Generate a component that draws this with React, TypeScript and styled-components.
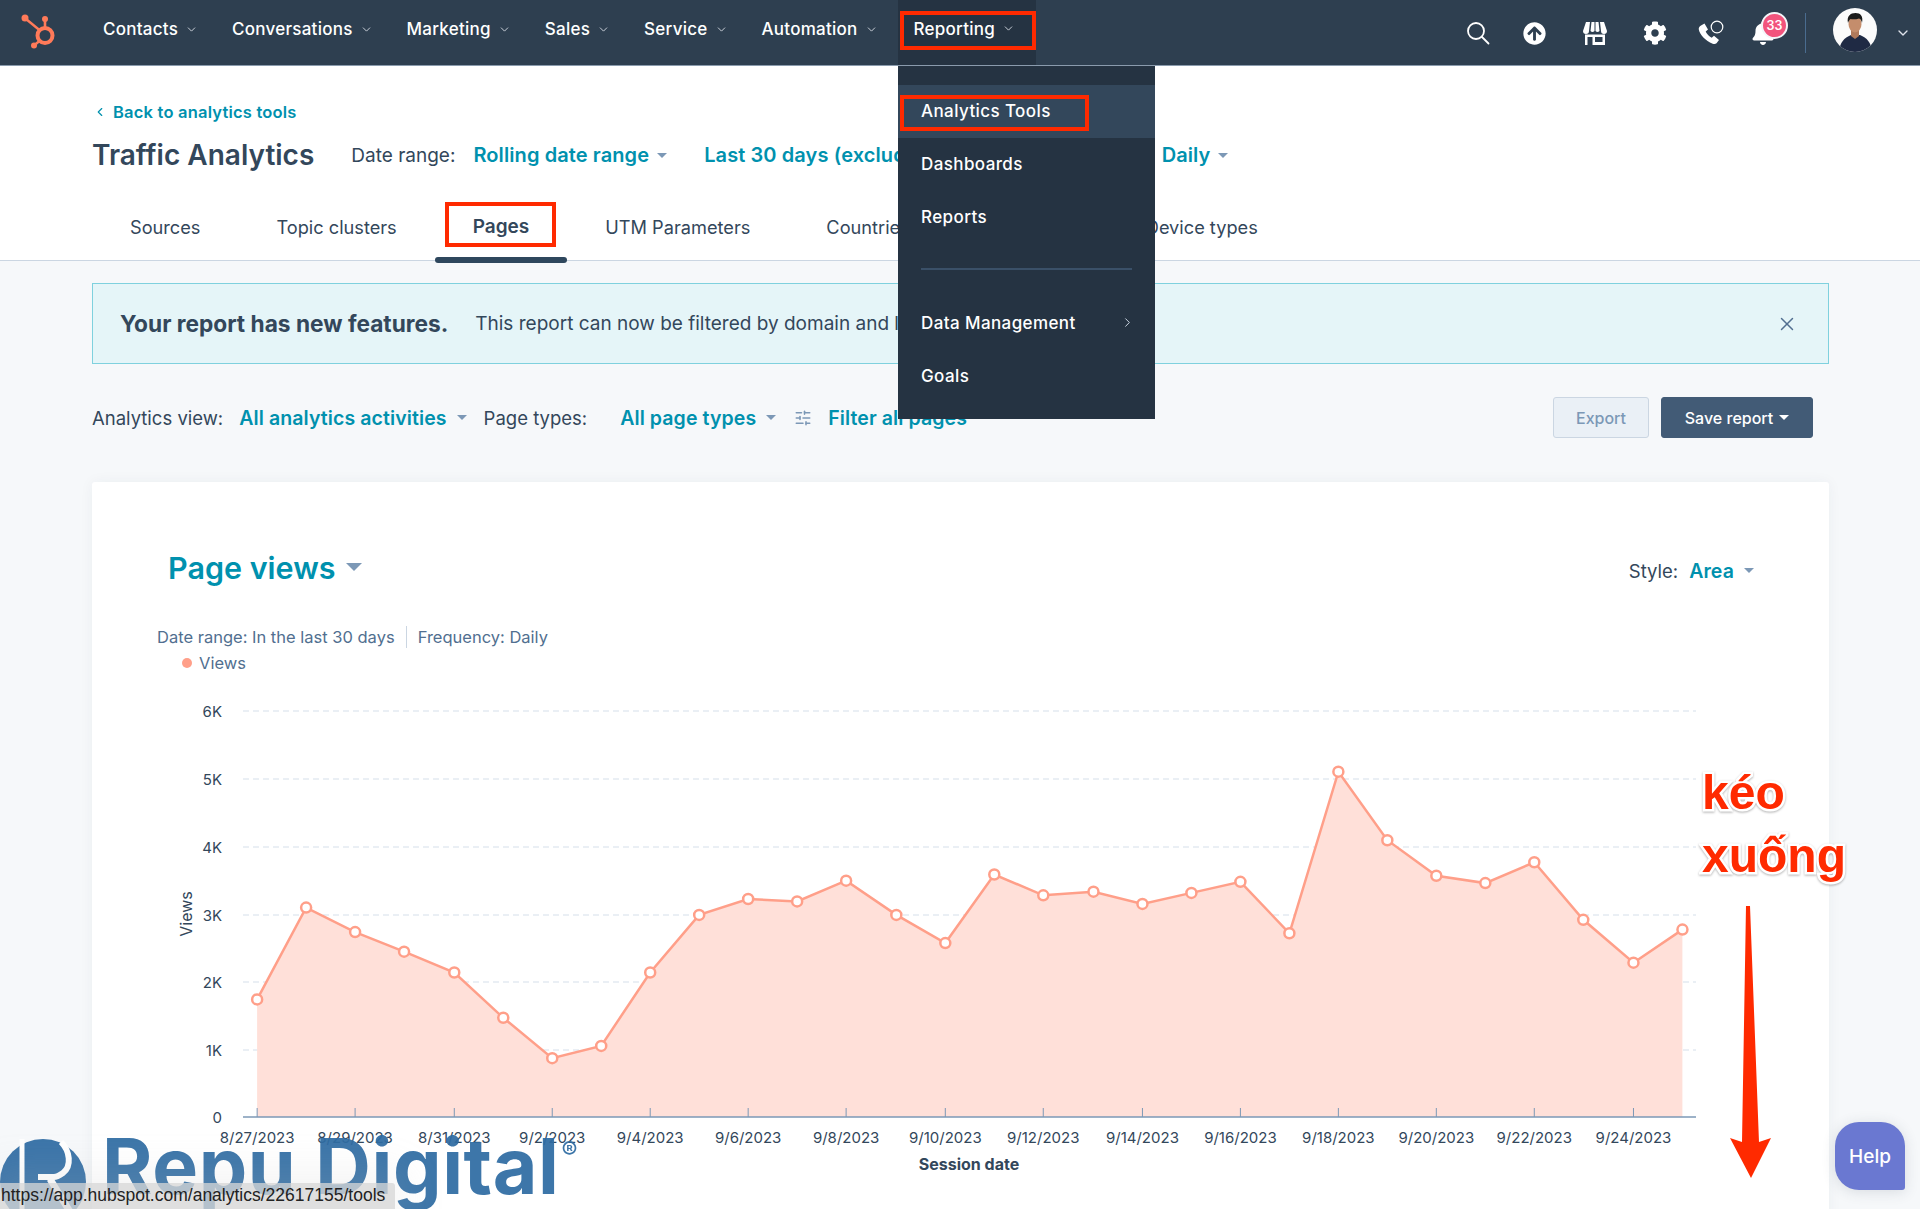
import React from 'react'
import styled, { createGlobalStyle } from 'styled-components'
import { ChevronDown, ChevronLeft, ChevronRight, SlidersHorizontal, X } from 'lucide-react'
import { FaArrowCircleUp, FaBell, FaCog } from 'react-icons/fa'

const GlobalStyle = createGlobalStyle`
    html, body {
        margin: 0;
        padding: 0;
        background: #f6f8fa;
    }
    * {
        box-sizing: border-box;
    }
`

const PageStyled = styled.div`
    position: relative;
    width: 1920px;
    height: 1209px;
    overflow: hidden;
    background: #f6f8fa;
    color: #33475b;
    font-family: 'Inter', 'Liberation Sans', sans-serif;
`

/* top nav */
const HeaderStyled = styled.header`
    display: flex;
    align-items: stretch;
    height: 66px;
    background: #2e3f50;
    border-bottom: 1px solid #8a9bad;
    color: #fff;
`
const LogoWrapperStyled = styled.div`
    display: flex;
    align-items: center;
    width: 86px;
    padding: 0 0 4px 18px;
`
const NavListStyled = styled.nav`
    display: flex;
    align-items: stretch;
`
const NavItemStyled = styled.div<{ $active?: boolean }>`
    position: relative;
    display: flex;
    align-items: center;
    padding: ${(p) => (p.$active ? '0 0 0 2px' : '0 17px')};
    margin-left: ${(p) => (p.$active ? '3px' : '0')};
    background: ${(p) => (p.$active ? '#253342' : 'transparent')};
    font-size: 17px;
    letter-spacing: 0.25px;
    font-weight: 500;
`
const NavLabelStyled = styled.div<{ $marked?: boolean }>`
    display: flex;
    align-items: center;
    gap: 7px;
    width: ${(p) => (p.$marked ? '136px' : 'auto')};
    height: ${(p) => (p.$marked ? '39px' : 'auto')};
    margin-bottom: ${(p) => (p.$marked ? '5px' : '7px')};
    padding: ${(p) => (p.$marked ? '0 0 3px 10px' : '0')};
    border: ${(p) => (p.$marked ? '4px solid #ff2a00' : 'none')};
`
const NavRightStyled = styled.div`
    display: flex;
    align-items: center;
    margin-left: auto;
    padding-right: 9px;
`
const NavIconStyled = styled.div<{ $width: number }>`
    position: relative;
    display: flex;
    align-items: center;
    justify-content: center;
    width: ${(p) => p.$width}px;
    height: 100%;
    padding-top: 1px;
`
const BadgeStyled = styled.span`
    position: absolute;
    top: 12px;
    left: 26px;
    width: 27px;
    height: 27px;
    border-radius: 50%;
    border: 2px solid #f4f6f9;
    background: #f2547d;
    color: #fff;
    font-size: 12.5px;
    font-weight: 600;
    line-height: 23px;
    text-align: center;
`
const NavDividerStyled = styled.div`
    width: 1px;
    height: 40px;
    margin: 0 27px 0 14px;
    background: #4a6c8f;
`
const AvatarStyled = styled.svg`
    margin-bottom: 5px;
`

/* reporting menu */
const MenuStyled = styled.div`
    position: absolute;
    top: 66px;
    left: 898px;
    z-index: 5;
    width: 257px;
    height: 353px;
    padding-top: 19px;
    background: #253342;
    font-size: 17px;
    letter-spacing: 0.4px;
    font-weight: 500;
    color: #fff;
`
const MenuItemStyled = styled.div<{ $active?: boolean }>`
    position: relative;
    display: flex;
    align-items: center;
    justify-content: space-between;
    height: 52.8px;
    padding: 0 20px 0 23px;
    background: ${(p) => (p.$active ? '#33475b' : 'transparent')};
`
const MenuMarkStyled = styled.div`
    position: absolute;
    top: 10px;
    left: 2px;
    width: 189px;
    height: 36px;
    border: 4px solid #ff2a00;
`
const MenuDividerStyled = styled.div`
    height: 2px;
    margin: 25px 23px 26px 23px;
    background: #3a5068;
`

/* page header */
const SubHeaderStyled = styled.section`
    height: 195px;
    background: #fff;
    border-bottom: 1px solid #cbd6e2;
    padding-top: 35px;
`
const BackLinkStyled = styled.a`
    display: flex;
    align-items: center;
    gap: 6px;
    margin-left: 93px;
    height: 22px;
    font-size: 16.5px;
    letter-spacing: 0.2px;
    font-weight: 600;
    color: #0091ae;
`
const TitleStyled = styled.h1`
    margin: 0 37px 0 0;
    font-size: 28px;
    font-weight: 600;
    color: #33475b;
    white-space: nowrap;
`
const LabelStyled = styled.span<{ $space?: number }>`
    font-size: 18.5px;
    font-weight: 400;
    color: #33475b;
    white-space: nowrap;
    margin-right: ${(p) => p.$space ?? 18}px;
`
const DropLinkStyled = styled.span<{ $space?: number }>`
    display: inline-flex;
    align-items: center;
    gap: 10px;
    font-size: 19.5px;
    letter-spacing: 0.1px;
    font-weight: 600;
    color: #0091ae;
    white-space: nowrap;
    margin-right: ${(p) => p.$space ?? 0}px;
`
const TitleRowStyled = styled.div`
    display: flex;
    align-items: center;
    height: 40px;
    margin-top: 12px;
    padding-left: 92px;

    & ${LabelStyled} {
        font-size: 19px;
    }
    & ${DropLinkStyled} {
        font-size: 20px;
        gap: 8px;
    }
`
const CaretStyled = styled.i<{ $size?: number; $light?: boolean }>`
    display: inline-block;
    width: 0;
    height: 0;
    border-left: ${(p) => p.$size ?? 5}px solid transparent;
    border-right: ${(p) => p.$size ?? 5}px solid transparent;
    border-top: ${(p) => p.$size ?? 5}px solid ${(p) => (p.$light ? '#fff' : '#7c98b6')};
`
const TabsStyled = styled.div`
    display: flex;
    height: 63px;
    margin-top: 25px;
    padding-left: 92px;
`
const TabStyled = styled.div<{ $active?: boolean; $skip?: number }>`
    position: relative;
    display: flex;
    align-items: center;
    height: 100%;
    padding: 0 38px 10px;
    margin-left: ${(p) => p.$skip ?? 0}px;
    font-size: ${(p) => (p.$active ? '19px' : '18.2px')};
    font-weight: ${(p) => (p.$active ? 600 : 400)};
    white-space: nowrap;
    &::after {
        content: '';
        display: ${(p) => (p.$active ? 'block' : 'none')};
        position: absolute;
        left: 0;
        right: 0;
        bottom: 0;
        height: 6px;
        border-radius: 3px;
        background: #2e475d;
    }
`
const TabMarkStyled = styled.div`
    position: absolute;
    top: 2px;
    left: 10px;
    right: 11px;
    height: 45px;
    border: 4px solid #ff2a00;
`

/* alert */
const AlertStyled = styled.div`
    display: flex;
    align-items: center;
    height: 81px;
    margin: 22px 91px 0 92px;
    padding: 0 30px 0 27px;
    background: #e5f5f8;
    border: 1px solid #7fd1de;
`
const AlertTitleStyled = styled.strong`
    margin-right: 27px;
    font-size: 22.7px;
    font-weight: 700;
    color: #33475b;
`
const AlertTextStyled = styled.span`
    font-size: 19px;
    flex: 1;
`

/* filters */
const FilterRowStyled = styled.div`
    display: flex;
    align-items: center;
    height: 41px;
    margin-top: 33px;
    padding: 0 107px 0 92px;
`
const FilterIconStyled = styled.span`
    display: inline-flex;
    margin: 0 16px 0 18px;
    color: #7c98b6;
`
const ExportButtonStyled = styled.button`
    width: 96px;
    height: 41px;
    margin-left: auto;
    background: #eaf0f6;
    border: 1px solid #cbd6e2;
    border-radius: 3px;
    color: #7c98b6;
    font: 500 16px 'Inter', sans-serif;
`
const SaveButtonStyled = styled.button`
    display: inline-flex;
    align-items: center;
    justify-content: center;
    gap: 6px;
    width: 152px;
    height: 41px;
    margin-left: 12px;
    background: #425b76;
    border: 1px solid #425b76;
    border-radius: 3px;
    color: #fff;
    font: 500 16px 'Inter', sans-serif;
`

/* chart card */
const CardStyled = styled.section`
    height: 760px;
    margin: 44px 91px 0 92px;
    padding-top: 64px;
    background: #fff;
    border-radius: 3px;
    box-shadow: 0 0 14px rgba(45, 62, 80, 0.05);
`
const CardHeadStyled = styled.div`
    display: flex;
    align-items: center;
    justify-content: space-between;
    height: 42px;
    padding: 0 75px 0 76px;
`
const CardTitleStyled = styled.h2`
    display: flex;
    align-items: center;
    gap: 10px;
    margin: 0;
    font-size: 30.5px;
    font-weight: 600;
    color: #0091ae;
`
const StyleLabelStyled = styled.div`
    display: flex;
    align-items: center;
    gap: 11px;
    margin-top: 7px;
    font-size: 18.5px;
`
const MetaRowStyled = styled.div`
    display: flex;
    align-items: center;
    margin-top: 38px;
    padding-left: 65px;
    font-size: 16.5px;
    color: #516f90;
`
const MetaDividerStyled = styled.span`
    width: 1px;
    height: 22px;
    margin: 0 11px;
    background: #cbd6e2;
`
const LegendStyled = styled.div`
    display: flex;
    align-items: center;
    gap: 7px;
    margin-top: 5px;
    padding-left: 90px;
    font-size: 16.5px;
    color: #516f90;
`
const LegendDotStyled = styled.span`
    width: 10px;
    height: 10px;
    border-radius: 50%;
    background: #ff9f89;
`
const ChartStyled = styled.svg`
    display: block;
    margin-top: 6px;
`

/* overlays */
const WatermarkStyled = styled.div`
    position: absolute;
    left: 0;
    top: 1120px;
    z-index: 6;
    display: flex;
    align-items: flex-start;
    color: #2f6ca3;
    opacity: 0.93;
`
const WatermarkLogoStyled = styled.svg`
    margin-top: 19px;
`
const WatermarkNameStyled = styled.span`
    margin-left: 16px;
    font-size: 77px;
    font-weight: 700;
    line-height: 92px;
    letter-spacing: 0.6px;
`
const WatermarkMarkStyled = styled.span`
    margin: 16px 0 0 2px;
    font-size: 24px;
    font-weight: 500;
`
const StatusBarStyled = styled.div`
    position: absolute;
    left: 0;
    bottom: 0;
    z-index: 7;
    width: 395px;
    height: 26px;
    padding-left: 1px;
    background: rgba(214, 214, 214, 0.78);
    border-top-right-radius: 3px;
    box-shadow: 0 0 40px 10px rgba(190, 190, 190, 0.18);
    color: #222;
    font-family: 'Liberation Sans', Arial, sans-serif;
    font-size: 17.5px;
    line-height: 25px;
    white-space: nowrap;
`
const HelpStyled = styled.div`
    position: absolute;
    left: 1835px;
    top: 1122px;
    z-index: 6;
    display: flex;
    align-items: center;
    justify-content: center;
    width: 70px;
    height: 68px;
    border-radius: 24px 24px 3px 24px;
    background: #6a78d1;
    box-shadow: 0 2px 14px rgba(45, 62, 80, 0.15);
    color: #fff;
    font-size: 19px;
    font-weight: 500;
`
const ScrollNoteStyled = styled.div`
    position: absolute;
    left: 1702px;
    top: 761px;
    z-index: 6;
    color: #ff2a00;
    font-family: 'Liberation Sans', Arial, sans-serif;
    font-size: 48px;
    font-weight: 700;
    line-height: 63px;
    -webkit-text-stroke: 5px #fff;
    paint-order: stroke fill;
    filter: drop-shadow(0 1px 1px rgba(0, 0, 0, 0.3));
`
const ScrollArrowStyled = styled.svg`
    position: absolute;
    left: 1725px;
    top: 900px;
    z-index: 6;
`
const AccountCaretStyled = styled.span`
    display: inline-flex;
    margin-left: 18px;
    color: #dfe3eb;
`

const navItems = ['Contacts', 'Conversations', 'Marketing', 'Sales', 'Service', 'Automation']

// points read off the chart, in page pixels
const SCALE = 1920 / 1568
const rawPoints: [number, number][] = [
    [210, 817], [250, 742], [290, 762], [330, 778], [371, 795], [411, 832], [451, 865], [491, 855],
    [531, 795], [571, 748], [611, 735], [651, 737], [691, 720], [732, 748], [772, 771], [812, 715],
    [852, 732], [893, 729], [933, 739], [973, 730], [1013, 721], [1053, 763], [1093, 631], [1133, 687],
    [1173, 716], [1213, 722], [1253, 705], [1293, 752], [1334, 787], [1374, 760],
]
const points = rawPoints.map(([x, y]) => [x * SCALE, y * SCALE])
const linePath = points.map(([x, y]) => `${x.toFixed(1)},${y.toFixed(1)}`).join(' ')
const areaPath = `${points[0][0].toFixed(1)},1118 ${linePath} ${points[points.length - 1][0].toFixed(1)},1118`

const gridLines = [
    { label: '6K', y: 712 },
    { label: '5K', y: 780 },
    { label: '4K', y: 848 },
    { label: '3K', y: 916 },
    { label: '2K', y: 983 },
    { label: '1K', y: 1051 },
]
const dateLabels = [
    '8/27/2023', '8/29/2023', '8/31/2023', '9/2/2023', '9/4/2023', '9/6/2023', '9/8/2023', '9/10/2023',
    '9/12/2023', '9/14/2023', '9/16/2023', '9/18/2023', '9/20/2023', '9/22/2023', '9/24/2023',
]

const HubspotLogo = () => (
    <svg width="42" height="40" viewBox="0 0 42 40">
        <g fill="none" stroke="#ff7a59" strokeLinecap="round">
            <circle cx="27" cy="24.500" r="7.500" strokeWidth="4" />
            <path d="M27 16V9" strokeWidth="2.600" />
            <path d="M22 19.500L8 8" strokeWidth="2.400" />
            <path d="M21.500 30L16.500 34" strokeWidth="2.400" />
        </g>
        <circle cx="7" cy="7" r="3.500" fill="#ff7a59" />
        <circle cx="27" cy="8" r="3" fill="#ff7a59" />
        <circle cx="16" cy="34.500" r="3" fill="#ff7a59" />
    </svg>
)

const SearchIcon = () => (
    <svg width="24" height="24" viewBox="0 0 24 24" fill="none" stroke="#fff" strokeWidth="1.800" strokeLinecap="round">
        <circle cx="10" cy="10" r="8" />
        <path d="M16 16l6.500 6.500" />
    </svg>
)

const StoreIcon = () => (
    <svg width="26" height="24" viewBox="0 0 26 24" fill="#fff">
        <path d="M4 1h4l-1 9a3 3 0 0 1-6 0zM9.500 1h3v9a3 3 0 0 1-4 0zM13.500 1h3l1 9a3 3 0 0 1-4 0zM18 1h4l3 9a3 3 0 0 1-6 0z" />
        <path fillRule="evenodd" d="M3 13.500h20V24H3zM5.500 16v8h5v-8zM13 16v5h7.500v-5z" />
    </svg>
)

const PhoneIcon = () => (
    <svg width="28" height="26" viewBox="0 0 28 26">
        <path
            d="M5 5.500l3.500-2 3.500 6-2.300 2c1 2.500 3.300 5 6 6.300l2.300-2 5 4.300-2.500 3.200c-1 .9-2.300 1-3.800.4C9.500 21 3.800 14.500 2.800 9.500c-.3-1.700.6-3 2.200-4z"
            fill="#fff"
        />
        <circle cx="21" cy="7" r="5.800" fill="none" stroke="#fff" strokeWidth="1.200" />
    </svg>
)

const Avatar = () => (
    <AvatarStyled width="44" height="44" viewBox="0 0 44 44">
        <defs>
            <clipPath id="avatar-clip">
                <circle cx="22" cy="22" r="22" />
            </clipPath>
        </defs>
        <g clipPath="url(#avatar-clip)">
            <rect width="44" height="44" fill="#fbfbfb" />
            <path d="M6 44c1-10 5-14 12-17h9c7 3 11 7 12 17z" fill="#1f2a44" />
            <path d="M18 21h8v7l-4 3-4-3z" fill="#b07a5c" />
            <ellipse cx="22" cy="16" rx="6.500" ry="8.500" fill="#c48d6c" />
            <path d="M15 15c-1.500-7 2.500-10 7.500-10s8 3 6.500 10c-.5-2.500-1.500-4-3-4.500-3 1-6.500 1-8.500.5-1 1-2 2-2.500 4z" fill="#1b1b1b" />
        </g>
    </AvatarStyled>
)

const WatermarkLogo = () => (
    <WatermarkLogoStyled width="86" height="86" viewBox="0 0 86 86">
        <circle cx="43" cy="43" r="43" fill="#2f6ca3" />
        <path d="M22 -2V88" stroke="#fff" strokeWidth="5" />
        <path d="M61 3c9 9 11 24 2 31-3 2-6 4-9 4H38" fill="none" stroke="#fff" strokeWidth="6" />
        <path d="M50 40l28 46" stroke="#fff" strokeWidth="7" />
    </WatermarkLogoStyled>
)

const NavCaret = () => <ChevronDown size={13} strokeWidth={1.6} color="#dfe3eb" />

const App = () => {
    return (
        <PageStyled>
            <GlobalStyle />

            <HeaderStyled>
                <LogoWrapperStyled>
                    <HubspotLogo />
                </LogoWrapperStyled>
                <NavListStyled>
                    {navItems.map((name) => (
                        <NavItemStyled key={name}>
                            <NavLabelStyled>
                                {name} <NavCaret />
                            </NavLabelStyled>
                        </NavItemStyled>
                    ))}
                    <NavItemStyled $active>
                        <NavLabelStyled $marked>
                            Reporting <NavCaret />
                        </NavLabelStyled>
                    </NavItemStyled>
                </NavListStyled>
                <NavRightStyled>
                    <NavIconStyled $width={50}>
                        <SearchIcon />
                    </NavIconStyled>
                    <NavIconStyled $width={62}>
                        <FaArrowCircleUp size={23} />
                    </NavIconStyled>
                    <NavIconStyled $width={60}>
                        <StoreIcon />
                    </NavIconStyled>
                    <NavIconStyled $width={60}>
                        <FaCog size={24} />
                    </NavIconStyled>
                    <NavIconStyled $width={50}>
                        <PhoneIcon />
                    </NavIconStyled>
                    <NavIconStyled $width={56}>
                        <FaBell size={24} />
                        <BadgeStyled>33</BadgeStyled>
                    </NavIconStyled>
                    <NavDividerStyled />
                    <Avatar />
                    <AccountCaretStyled>
                        <ChevronDown size={16} strokeWidth={2} />
                    </AccountCaretStyled>
                </NavRightStyled>
            </HeaderStyled>

            <MenuStyled>
                <MenuItemStyled $active>
                    Analytics Tools
                    <MenuMarkStyled />
                </MenuItemStyled>
                <MenuItemStyled>Dashboards</MenuItemStyled>
                <MenuItemStyled>Reports</MenuItemStyled>
                <MenuDividerStyled />
                <MenuItemStyled>
                    Data Management
                    <ChevronRight size={15} strokeWidth={1.6} color="#cbd6e2" />
                </MenuItemStyled>
                <MenuItemStyled>Goals</MenuItemStyled>
            </MenuStyled>

            <SubHeaderStyled>
                <BackLinkStyled>
                    <ChevronLeft size={14} strokeWidth={2} /> Back to analytics tools
                </BackLinkStyled>
                <TitleRowStyled>
                    <TitleStyled>Traffic Analytics</TitleStyled>
                    <LabelStyled>Date range:</LabelStyled>
                    <DropLinkStyled $space={37}>
                        Rolling date range <CaretStyled />
                    </DropLinkStyled>
                    <DropLinkStyled $space={158}>Last 30 days (excluding today)</DropLinkStyled>
                    <DropLinkStyled>
                        Daily <CaretStyled />
                    </DropLinkStyled>
                </TitleRowStyled>
                <TabsStyled>
                    <TabStyled>Sources</TabStyled>
                    <TabStyled>Topic clusters</TabStyled>
                    <TabStyled $active>
                        Pages
                        <TabMarkStyled />
                    </TabStyled>
                    <TabStyled>UTM Parameters</TabStyled>
                    <TabStyled>Countries</TabStyled>
                    <TabStyled $skip={160}>Device types</TabStyled>
                </TabsStyled>
            </SubHeaderStyled>

            <AlertStyled>
                <AlertTitleStyled>Your report has new features.</AlertTitleStyled>
                <AlertTextStyled>This report can now be filtered by domain and language.</AlertTextStyled>
                <X size={22} strokeWidth={1.6} color="#516f90" />
            </AlertStyled>

            <FilterRowStyled>
                <LabelStyled $space={16}>Analytics view:</LabelStyled>
                <DropLinkStyled $space={17}>
                    All analytics activities <CaretStyled />
                </DropLinkStyled>
                <LabelStyled $space={33}>Page types:</LabelStyled>
                <DropLinkStyled>
                    All page types <CaretStyled />
                </DropLinkStyled>
                <FilterIconStyled>
                    <SlidersHorizontal size={18} />
                </FilterIconStyled>
                <DropLinkStyled>Filter all pages</DropLinkStyled>
                <ExportButtonStyled>Export</ExportButtonStyled>
                <SaveButtonStyled>
                    Save report <CaretStyled $light />
                </SaveButtonStyled>
            </FilterRowStyled>

            <CardStyled>
                <CardHeadStyled>
                    <CardTitleStyled>
                        Page views <CaretStyled $size={8} />
                    </CardTitleStyled>
                    <StyleLabelStyled>
                        Style: <DropLinkStyled>Area <CaretStyled /></DropLinkStyled>
                    </StyleLabelStyled>
                </CardHeadStyled>
                <MetaRowStyled>
                    Date range: In the last 30 days
                    <MetaDividerStyled />
                    Frequency: Daily
                </MetaRowStyled>
                <LegendStyled>
                    <LegendDotStyled />
                    Views
                </LegendStyled>
                <ChartStyled width="1737" height="500" viewBox="92 680 1737 500">
                    {gridLines.map((g) => (
                        <g key={g.label}>
                            <line x1="243" x2="1696" y1={g.y} y2={g.y} stroke="#d5dfea" strokeDasharray="6 4" />
                            <text x="222" y={g.y + 6} textAnchor="end" fontSize="15" fill="#33475b">{g.label}</text>
                        </g>
                    ))}
                    <polygon points={areaPath} fill="#ffe0d9" />
                    <polyline points={linePath} fill="none" stroke="#ff9f89" strokeWidth="2.5" />
                    {points.map(([x, y]) => (
                        <circle key={x} cx={x} cy={y} r="5" fill="#fff" stroke="#ff9f89" strokeWidth="2.5" />
                    ))}
                    <line x1="243" x2="1696" y1="1118" y2="1118" stroke="#7c98b6" strokeWidth="1.5" />
                    <text x="222" y="1124" textAnchor="end" fontSize="15" fill="#33475b">0</text>
                    {dateLabels.map((label, i) => {
                        const x = points[i * 2][0]
                        return (
                            <g key={label}>
                                <line x1={x} x2={x} y1="1109" y2="1118" stroke="#7c98b6" />
                                <text x={x} y="1144" textAnchor="middle" fontSize="15" fill="#33475b">{label}</text>
                            </g>
                        )
                    })}
                    <text x="969" y="1171" textAnchor="middle" fontSize="16" fontWeight="700" fill="#33475b">Session date</text>
                    <text x="192" y="915" textAnchor="middle" fontSize="16" fill="#33475b" transform="rotate(-90 192 915)">Views</text>
                </ChartStyled>
            </CardStyled>

            <ScrollNoteStyled>
                kéo
                <br />
                xuống
            </ScrollNoteStyled>
            <ScrollArrowStyled width="50" height="282" viewBox="1725 900 50 282">
                <polygon points="1746,906 1750,906 1759,1142 1771,1138 1751,1178 1730,1138 1742,1142" fill="#ff2a00" />
            </ScrollArrowStyled>

            <HelpStyled>Help</HelpStyled>

            <WatermarkStyled>
                <WatermarkLogo />
                <WatermarkNameStyled>Repu Digital</WatermarkNameStyled>
                <WatermarkMarkStyled>®</WatermarkMarkStyled>
            </WatermarkStyled>
            <StatusBarStyled>https://app.hubspot.com/analytics/22617155/tools</StatusBarStyled>
        </PageStyled>
    )
}

export default App
